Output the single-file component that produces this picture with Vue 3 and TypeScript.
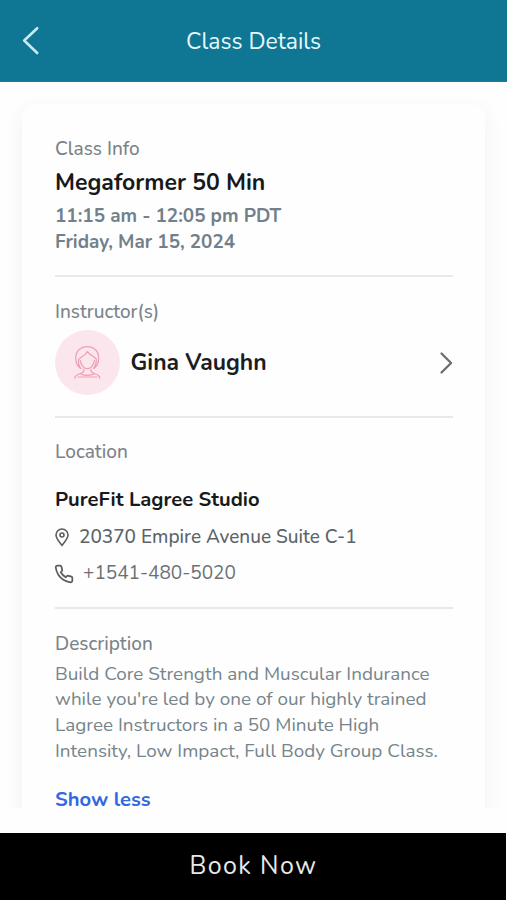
<script setup lang="ts">
interface ClassDetails {
  name: string
  time: string
  date: string
  instructor: string
  studio: string
  address: string
  phone: string
  description: string[]
}

const details: ClassDetails = {
  name: 'Megaformer 50 Min',
  time: '11:15 am - 12:05 pm PDT',
  date: 'Friday, Mar 15, 2024',
  instructor: 'Gina Vaughn',
  studio: 'PureFit Lagree Studio',
  address: '20370 Empire Avenue Suite C-1',
  phone: '+1541-480-5020',
  description: [
    'Build Core Strength and Muscular Indurance',
    "while you're led by one of our highly trained",
    'Lagree Instructors in a 50 Minute High',
    'Intensity, Low Impact, Full Body Group Class.',
  ],
}
</script>

<template>
  <div class="screen">
    <header class="header">
      <svg class="back" viewBox="0 0 18 30" fill="none" stroke="currentColor">
        <path d="M15.2 2.2 2.2 14.5 15.2 27" />
      </svg>
      <h1 class="title">Class Details</h1>
    </header>

    <main class="content">
      <div class="card">
        <section class="block info">
          <div class="label">Class Info</div>
          <div class="name">{{ details.name }}</div>
          <div class="when w-time">{{ details.time }}</div>
          <div class="when">{{ details.date }}</div>
        </section>

        <section class="block instructor">
          <div class="label">Instructor(s)</div>
          <div class="person">
            <div class="avatar">
              <svg viewBox="0 0 29 35" fill="none" stroke="currentColor">
                <path d="M7.800 23.400C4.300 21.300 2.700 17.500 2.700 12.900 2.700 6.300 7.500 1.600 14.200 1.600S25.700 6.300 25.700 12.900c0 4.600-1.600 8.400-5.100 10.500" />
                <path d="M14.400 6.500C12.800 11 7.500 11.400 5.600 14.600c-.5 3.300.5 6.700 2.200 8.800M14.400 6.500c1.500 3.300 6.700 4.500 8.800 7.300.3 3.600-.8 7.500-2.600 9.600" />
                <path d="M7.300 15.600c.6 4.400 3.600 8.100 7 8.100s6.400-3.700 7.100-8.100" />
                <path d="M10.800 24.300v1.500c0 1.500-1.300 2.100-4 3-2.900 1-4.700 1.900-5 4.300M17.900 24.300v1.500c0 1.500 1.300 2.100 4 3 2.900 1 4.700 1.900 5 4.300M7.300 28.800c3 2 11.100 2 14.100 0M5 32h19" />
              </svg>
            </div>
            <div class="person-name">{{ details.instructor }}</div>
            <svg class="next" viewBox="0 0 14 24" fill="none" stroke="currentColor">
              <path d="m2.500 2.500 9.600 9.500L2.500 21.500" />
            </svg>
          </div>
        </section>

        <section class="block location">
          <div class="label">Location</div>
          <div class="studio">{{ details.studio }}</div>
          <div class="contact address">
            <svg class="pin" viewBox="0 0 14 19" fill="none" stroke="currentColor">
              <path d="M7 17.300C5.300 15 1 10.700 1 7a6 6 0 0 1 12 0c0 3.700-4.300 8-6 10.300Z" />
              <circle cx="7" cy="7" r="2" />
            </svg>
            <span>{{ details.address }}</span>
          </div>
          <div class="contact phone">
            <svg class="handset" viewBox="0 0 24 24" fill="none" stroke="currentColor">
              <path d="M22 16.920v3a2 2 0 0 1-2.180 2 19.790 19.790 0 0 1-8.630-3.070 19.500 19.500 0 0 1-6-6 19.790 19.790 0 0 1-3.070-8.670A2 2 0 0 1 4.110 2h3a2 2 0 0 1 2 1.720 12.840 12.840 0 0 0 .7 2.810 2 2 0 0 1-.45 2.110L8.090 9.910a16 16 0 0 0 6 6l1.270-1.270a2 2 0 0 1 2.110-.45 12.840 12.840 0 0 0 2.810.7A2 2 0 0 1 22 16.920z" />
            </svg>
            <span>{{ details.phone }}</span>
          </div>
        </section>

        <section class="block about">
          <div class="label">Description</div>
          <p class="description">
            <span v-for="(line, i) in details.description" :key="i">{{ line }}</span>
          </p>
          <a class="toggle">Show less</a>
        </section>
      </div>
    </main>

    <footer class="footer">
      <button class="book">Book Now</button>
    </footer>
  </div>
</template>

<style>
body {
  background: #fff;
}
</style>

<style scoped>
.screen {
  display: flex;
  flex-direction: column;
  width: 507px;
  height: 900px;
  overflow: hidden;
  background: #fefefe;
  font-family: Nunito, Lato, "Open Sans", sans-serif;
  font-size: 19px;
  line-height: 26px;
  white-space: nowrap;
}
.header {
  display: grid;
  grid-template-columns: 60px 1fr 60px;
  align-items: center;
  flex: none;
  box-sizing: border-box;
  height: 81.500px;
  padding-top: 2px;
  background: #0f7794;
  border-bottom: 1px solid #257b97;
}
.back {
  width: 18px;
  height: 30px;
  margin-left: 22px;
  color: #cce8f1;
  stroke-width: 2.600;
  stroke-linecap: round;
  stroke-linejoin: round;
}
.title {
  margin: 0;
  padding-top: 2px;
  text-align: center;
  color: #e6f8fc;
  font-size: 23px;
  font-weight: 400;
}
.content {
  flex: none;
  height: 726.500px;
  overflow: hidden;
}
.card {
  box-sizing: border-box;
  width: 463px;
  height: 760px;
  margin: 22.500px 22px 0;
  padding: 32px 32px 0 33px;
  border-radius: 14px;
  background: #fefefe;
  box-shadow: 0 6px 22px rgba(0, 0, 0, 0.055);
}
.block {
  box-sizing: border-box;
  border-bottom: 2px solid #e7e8e9;
}
.info {
  height: 141px;
}
.instructor {
  height: 140.500px;
  padding-top: 22px;
}
.location {
  height: 191px;
  padding-top: 21.500px;
}
.about {
  padding-top: 22.500px;
  border-bottom: 0;
}
.label {
  color: #7b8389;
  font-weight: 500;
}
.name {
  margin-top: 6px;
  color: #17191b;
  font-size: 23px;
  font-weight: 700;
  line-height: 30px;
}
.when {
  color: #71808a;
  font-size: 18.900px;
  font-weight: 700;
}
.w-time {
  margin-top: 4.500px;
}
.person {
  display: flex;
  align-items: center;
  height: 65px;
  margin-top: 5px;
}
.avatar {
  display: grid;
  place-items: center;
  width: 65px;
  height: 65px;
  border-radius: 50%;
  background: #fce6ed;
  color: #ed9db3;
}
.avatar svg {
  width: 29px;
  height: 35px;
  stroke-width: 1.200;
  stroke-linecap: round;
  stroke-linejoin: round;
}
.person-name {
  flex: 1;
  margin-left: 10.500px;
  color: #1b1d1f;
  font-size: 22.900px;
  font-weight: 700;
}
.next {
  width: 14px;
  height: 24px;
  color: #6b6e71;
  stroke-width: 2.300;
  stroke-linecap: round;
  stroke-linejoin: round;
}
.studio {
  margin-top: 22px;
  color: #17191b;
  font-size: 20.200px;
  font-weight: 700;
}
.contact {
  display: flex;
  align-items: center;
  color: #5c6468;
}
.address {
  margin-top: 10.500px;
  font-weight: 500;
}
.phone {
  margin-top: 10.500px;
  color: #6a7175;
}
.pin {
  width: 14px;
  height: 19px;
  margin: 2px 10px 0 0;
  color: #5a5e61;
  stroke-width: 1.600;
}
.handset {
  width: 20px;
  height: 20px;
  margin: 2px 9px 0 -1px;
  color: #5a5e61;
  stroke-width: 2.100;
  stroke-linejoin: round;
}
.description {
  display: flex;
  flex-direction: column;
  margin: 4.700px 0 0;
  color: #76848b;
  font-size: 18.900px;
  line-height: 25.700px;
}
.toggle {
  display: block;
  margin-top: 23px;
  color: #3268e0;
  font-size: 20.200px;
  line-height: 24px;
  font-weight: 700;
}
.footer {
  display: flex;
  flex: none;
  height: 67.500px;
  margin-top: 24.500px;
  padding-right: 1px;
}
.book {
  flex: 1;
  padding: 0 0 0 1px;
  border: 0;
  background: #000;
  color: #e8e8e8;
  font: inherit;
  font-size: 25px;
  letter-spacing: 1.400px;
}
</style>
